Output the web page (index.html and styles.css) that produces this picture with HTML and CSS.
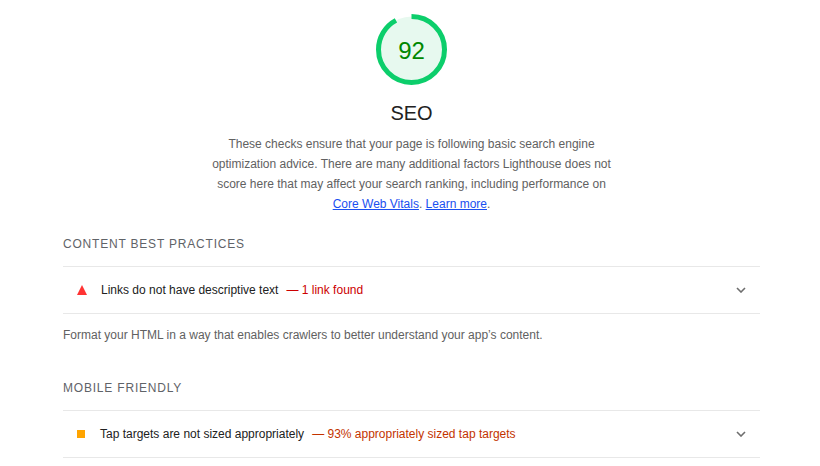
FILE: index.html
```html
<!DOCTYPE html>
<html>

<head>
    <meta name="viewport" content="width=device-width, initial-scale=1">
    <link rel="stylesheet" href="styles.css">
</head>

<body>
    <div class="category">
        <div class="category-header">
            <div class="gauge">
                <svg viewBox="0 0 71 71" width="71" height="71">
                    <circle class="gauge-base" cx="35.5" cy="35.5" r="33"></circle>
                    <!-- 92% arc, starting at 12 o'clock -->
                    <circle class="gauge-arc" cx="35.5" cy="35.5" r="33" transform="rotate(-90 35.5 35.5)"
                        stroke-dasharray="190.8 207.3"></circle>
                </svg>
                <div class="gauge-percentage">92</div>
            </div>
            <div class="category-title">SEO</div>
            <p class="category-description">These checks ensure that your page is following basic search engine
                optimization advice. There are many additional factors Lighthouse does not score here that may
                affect your search ranking, including performance on <a href="#">Core Web Vitals</a>. <a
                    href="#">Learn more</a>.</p>
        </div>

        <div class="audit-group">
            <div class="group-title">Content Best Practices</div>
            <div class="audit audit-fail">
                <span class="score-icon"></span>
                <span class="audit-title">Links do not have descriptive text</span>
                <span class="display-text">— 1 link found</span>
                <svg class="chevron" viewBox="0 0 10 6" width="10" height="6">
                    <path d="M1 1 L5 5 L9 1"></path>
                </svg>
            </div>
            <div class="group-description">Format your HTML in a way that enables crawlers to better understand your
                app’s content.</div>
        </div>

        <div class="audit-group">
            <div class="group-title group-title-next">Mobile Friendly</div>
            <div class="audit audit-average">
                <span class="score-icon"></span>
                <span class="audit-title">Tap targets are not sized appropriately</span>
                <span class="display-text">— 93% appropriately sized tap targets</span>
                <svg class="chevron" viewBox="0 0 10 6" width="10" height="6">
                    <path d="M1 1 L5 5 L9 1"></path>
                </svg>
            </div>
        </div>
    </div>
</body>

</html>
```

FILE: styles.css
```css
* {
    box-sizing: border-box
}

body {
    font-family: "Liberation Sans", Arial, sans-serif;
    font-size: 12px;
    color: #212121;
    margin: 0;
    background: #fff;
}

.category {
    padding: 14px 60px 0 63px;
}

/* Gauge + title + description */
.category-header {
    display: flex;
    flex-direction: column;
    align-items: center;
    text-align: center;
}

.gauge {
    position: relative;
    width: 71px;
    height: 71px;
}

.gauge svg {
    display: block;
}

.gauge-base {
    fill: #e7f9ef;
    stroke: none;
}

.gauge-arc {
    fill: none;
    stroke: #0cce6b;
    stroke-width: 5;
}

.gauge-percentage {
    position: absolute;
    top: 0;
    left: 0;
    width: 100%;
    line-height: 73px;
    font-size: 24px;
    color: #008800;
}

.category-title {
    margin-top: 16px;
    font-size: 20px;
    line-height: 24px;
    color: #212121;
}

.category-description {
    width: 402px;
    margin: 9px 0 0;
    line-height: 20px;
    color: #616161;
}

.category-description a {
    color: #1a4ff0;
}

/* Audit groups */
.group-title {
    margin-top: 22px;
    margin-bottom: 14px;
    line-height: 16px;
    text-transform: uppercase;
    letter-spacing: 0.8px;
    color: #5f6368;
}

.group-title-next {
    margin-top: 37px;
}

.group-description {
    margin-top: 13px;
    line-height: 16px;
    color: #616161;
}

.audit {
    display: flex;
    align-items: center;
    height: 48px;
    padding: 0 14px;
    border-top: 1px solid #e8e8e8;
    border-bottom: 1px solid #e8e8e8;
}

.score-icon {
    flex: none;
    width: 10px;
    height: 10px;
    margin-right: 14px;
}

.audit-fail .score-icon {
    border-left: 5px solid transparent;
    border-right: 5px solid transparent;
    border-bottom: 10px solid #ff3333;
}

.audit-average .score-icon {
    width: 8px;
    height: 8px;
    margin-right: 15px;
    background: #ffa400;
}

.display-text {
    margin-left: 8px;
}

.audit-fail .display-text {
    color: #cc0000;
}

.audit-average .display-text {
    color: #c33300;
}

.chevron {
    margin-left: auto;
    fill: none;
    stroke: #6e6e6e;
    stroke-width: 1.6;
}
```
